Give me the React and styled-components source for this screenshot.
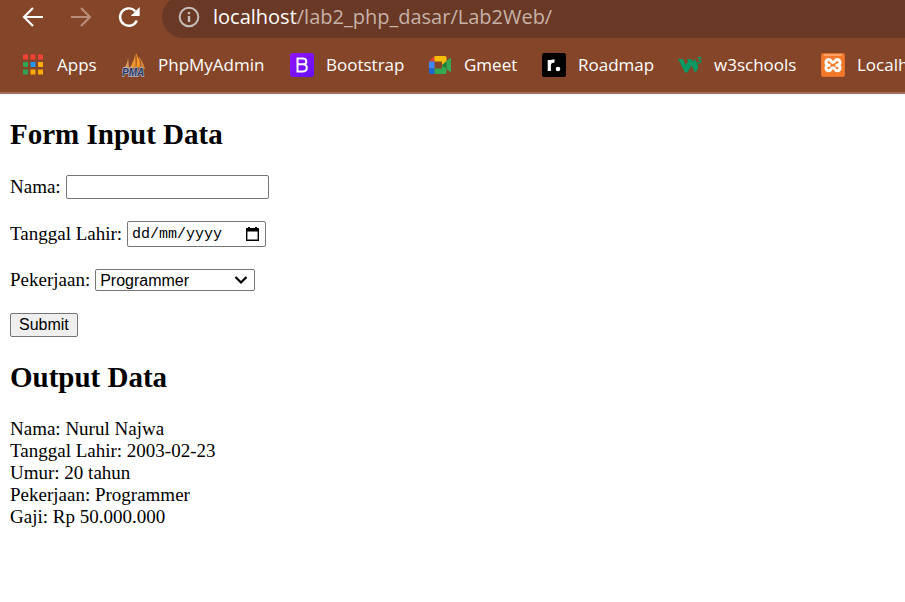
import React from "react";
import styled, { createGlobalStyle } from "styled-components";

const GlobalStyle = createGlobalStyle`
  body {
    margin: 0;
    background: #ffffff;
    color: #000000;
  }
  * {
    box-sizing: border-box;
  }
`;

const BrowserHeader = styled.header`
  background: #854528;
  border-bottom: 2px solid #a36f5c;
  font-family: "Open Sans", "Noto Sans", sans-serif;
  overflow: hidden;
`;

const Toolbar = styled.div`
  display: flex;
  align-items: flex-end;
  height: 38px;
  padding-left: 21px;
`;

const NavButtons = styled.nav`
  display: flex;
  gap: 24px;
  padding-bottom: 9px;
  margin-right: 21px;
`;

const IconButton = styled.button`
  display: flex;
  padding: 0;
  border: 0;
  background: none;
  color: ${({ disabled }) => (disabled ? "#b98d7b" : "#ffffff")};
`;

const AddressBar = styled.div`
  flex: 1;
  display: flex;
  align-items: center;
  gap: 12px;
  height: 42px;
  padding-left: 15px;
  border-radius: 21px 0 0 21px;
  background: #693926;
  color: #c6b2a9;
  font-size: 20px;
  line-height: 26px;
  white-space: nowrap;
`;

const Host = styled.span`
  color: #ffffff;
`;

const Bookmarks = styled.nav`
  display: flex;
  align-items: center;
  height: 54px;
  padding-left: 21px;
`;

const Bookmark = styled.a`
  display: flex;
  align-items: center;
  flex: 0 0 ${({ $width }) => $width}px;
  gap: 12px;
  color: #ffffff;
  font-size: 17px;
  line-height: 24px;
  white-space: nowrap;
  text-decoration: none;

  svg {
    flex-shrink: 0;
  }
`;

const Page = styled.main`
  padding: 24px 10px;
  font-family: "Liberation Serif", "Times New Roman", serif;
  font-size: 19px;
  line-height: 22px;
`;

const Heading = styled.h2`
  margin: 0 0 24px;
  font-size: 29px;
  line-height: 33px;
`;

const Form = styled.form`
  display: flex;
  flex-direction: column;
  align-items: flex-start;
  gap: 22px;
  margin-bottom: 24px;
`;

const Field = styled.div`
  display: flex;
  align-items: center;
  gap: 5px;
`;

const TextInput = styled.input`
  width: 203px;
  height: 24px;
  padding: 1px 2px;
  border: 1px solid #767676;
  border-radius: 2px;
  font: 16px "Liberation Sans", Arial, sans-serif;
`;

const DateBox = styled.div`
  display: flex;
  align-items: center;
  width: 139px;
  height: 26px;
  padding: 0 5px 0 4px;
  border: 1px solid #767676;
  border-radius: 2px;
  background: #ffffff;
`;

const DateInput = styled.input`
  flex: 1;
  min-width: 0;
  padding: 0;
  border: 0;
  outline: 0;
  font: 15px "Liberation Mono", monospace;

  &::placeholder {
    color: #000000;
    opacity: 1;
  }
`;

const PickerButton = styled.button`
  display: flex;
  padding: 0;
  border: 0;
  background: none;
  color: #000000;
`;

const SelectBox = styled.div`
  display: grid;
  align-items: center;
  width: 160px;

  > * {
    grid-area: 1 / 1;
  }

  > svg {
    justify-self: end;
    margin-right: 7px;
    pointer-events: none;
  }
`;

const Select = styled.select`
  appearance: none;
  width: 100%;
  height: 22px;
  padding: 0 4px;
  border: 1px solid #767676;
  border-radius: 2px;
  background: #ffffff;
  color: #000000;
  font: 16px "Liberation Sans", Arial, sans-serif;
`;

const SubmitButton = styled.button`
  height: 24px;
  padding: 0 8px;
  border: 1px solid #767676;
  border-radius: 2px;
  background: #efefef;
  color: #000000;
  font: 16px "Liberation Sans", Arial, sans-serif;
`;

const BackIcon = () => (
  <svg width="24" height="24" viewBox="0 0 24 24" fill="none" stroke="currentColor" strokeWidth="2.2">
    <path d="M22 12H3.5M12 3l-9 9 9 9" />
  </svg>
);

const ForwardIcon = () => (
  <svg width="24" height="24" viewBox="0 0 24 24" fill="none" stroke="currentColor" strokeWidth="2.2">
    <path d="M2 12h18.500M12 3l9 9-9 9" />
  </svg>
);

const ReloadIcon = () => (
  <svg width="24" height="24" viewBox="0 0 24 24" fill="none">
    <path d="M19.800 15.500A8.700 8.700 0 1 1 18.200 6.200" stroke="currentColor" strokeWidth="2.4" />
    <path d="M22.700 2v9h-9z" fill="currentColor" />
  </svg>
);

const InfoIcon = () => (
  <svg width="24" height="24" viewBox="0 0 24 24" fill="none" stroke="#c5bcb9" strokeWidth="2">
    <circle cx="12" cy="12" r="9.300" />
    <path d="M12 11v6M12 7v2.200" strokeWidth="2.400" />
  </svg>
);

const appColors = ["#f44336", "#f44336", "#f44336", "#31a354", "#2196f3", "#ffab00", "#31a354", "#ffab00", "#ffab00"];

const AppsIcon = () => (
  <svg width="24" height="24" viewBox="0 0 24 24">
    {appColors.map((color, i) => (
      <rect key={i} x={2 + (i % 3) * 7.500} y={1.500 + Math.floor(i / 3) * 7.500} width="5" height="5" fill={color} />
    ))}
  </svg>
);

const PmaIcon = () => (
  <svg width="24" height="24" viewBox="0 0 24 24">
    <path d="M6 4C6 9 4 13 1.500 16L7 15z" fill="#d99a5c" />
    <path d="M13 0C13 6 10 11 6.500 16L15 14z" fill="#f0962f" />
    <path d="M14 0l7 15-6-1z" fill="#ff9822" />
    <path d="M17 4c3 4 5 7 6 12l-5-1z" fill="#d9863a" />
    <path d="M11 6L8 15M14 3v12M18 7l1 8" stroke="#8e4b2b" strokeWidth="0.800" />
    <text
      x="0"
      y="23"
      fontFamily="Liberation Sans, sans-serif"
      fontSize="10"
      fontWeight="700"
      fontStyle="italic"
      fill="#293665"
      stroke="#b6b6c7"
      strokeWidth="1.400"
      paintOrder="stroke"
    >
      PMA
    </text>
  </svg>
);

const BootstrapIcon = () => (
  <svg width="24" height="24" viewBox="0 0 24 24">
    <defs>
      <linearGradient id="bootstrap-fill" x2="1" y2="1">
        <stop stopColor="#9013fe" />
        <stop offset="1" stopColor="#6610f2" />
      </linearGradient>
    </defs>
    <rect width="24" height="24" rx="3" fill="url(#bootstrap-fill)" />
    <path
      d="M7.500 5.500h5.300c2.200 0 3.500 1.100 3.500 2.900 0 1.800-1.300 2.900-3.500 2.900H7.500h5.500c2.500 0 3.800 1.400 3.800 3.500 0 2.300-1.500 3.700-4.200 3.700H7.500z"
      fill="none"
      stroke="#ffffff"
      strokeWidth="2"
    />
  </svg>
);

const MeetIcon = () => (
  <svg width="24" height="24" viewBox="0 0 24 24">
    <path d="M1 8.500L6.500 3v5.500z" fill="#ea4335" />
    <path d="M1 8.500h5.500v7H1z" fill="#4285f4" />
    <path d="M1 15.500h5.500V21H2.500Q1 21 1 19.500z" fill="#1967d2" />
    <path d="M6.500 3H17q1.500 0 1.500 1.500V9L14 12.500v-4H6.500z" fill="#fbbc04" />
    <path d="M6.500 15.500H14V12l4.500 3.500v4Q18.500 21 17 21H6.500z" fill="#34a853" />
    <path d="M14 12l4.500-4v8z" fill="#188038" />
    <path d="M18.500 8L23 4.500v15L18.500 16z" fill="#34a853" />
  </svg>
);

const RoadmapIcon = () => (
  <svg width="24" height="24" viewBox="0 0 24 24">
    <rect width="24" height="24" rx="2.500" fill="#000000" />
    <path d="M7.300 18V7M7.300 12.500c0-3.300 2-4.800 5.200-4.300" fill="none" stroke="#ffffff" strokeWidth="3.200" />
    <circle cx="16" cy="16" r="2.300" fill="#ffffff" />
  </svg>
);

const W3Icon = () => (
  <svg width="24" height="24" viewBox="0 0 24 24">
    <path d="M0 6h5l2.800 6L10 8.500 9 6h4l2 2.500L17 6l3 6.500V16l-3 3.500-3.600-7-3.900 7H7z" fill="#059862" />
    <path d="M19.500 4.600h3.400l-1.800 2.200c2.600.1 2 3.400-.2 3.400-.9 0-1.400-.4-1.600-1" fill="none" stroke="#059862" strokeWidth="1.200" />
  </svg>
);

const XamppIcon = () => (
  <svg width="24" height="24" viewBox="0 0 24 24">
    <rect width="24" height="24" rx="2" fill="#e0702c" />
    <rect x="1" y="1" width="22" height="22" rx="1" fill="#f4782a" />
    <path d="M3 2h18" stroke="#ffc9a4" />
    <path
      d="M9.500 12.200H8C4 12.200 4 6.500 7.800 6.500c2.500 0 2 3 4.200 3s1.700-3 4.200-3c3.800 0 3.800 5.700-.2 5.700h-1.500H16c4 0 4 5.600.2 5.600-2.500 0-2-3-4.200-3s-1.700 3-4.200 3c-3.800 0-3.800-5.600.2-5.600z"
      fill="none"
      stroke="#ffffff"
      strokeWidth="3"
    />
  </svg>
);

const CalendarIcon = () => (
  <svg width="15" height="16" viewBox="0 0 15 16">
    <path d="M1.700 2.700h11.600v11.600H1.700z" fill="none" stroke="currentColor" strokeWidth="1.400" />
    <path d="M1 2h13v3.500H1zM3 1h2v2H3zM10 1h2v2h-2z" fill="currentColor" />
  </svg>
);

const ChevronIcon = () => (
  <svg width="14" height="10" viewBox="0 0 14 10" fill="none" stroke="#000000" strokeWidth="2.200">
    <path d="M1.500 2l5.500 5.500L12.500 2" />
  </svg>
);

const bookmarks = [
  { label: "Apps", Icon: AppsIcon, width: 101 },
  { label: "PhpMyAdmin", Icon: PmaIcon, width: 168 },
  { label: "Bootstrap", Icon: BootstrapIcon, width: 138 },
  { label: "Gmeet", Icon: MeetIcon, width: 114 },
  { label: "Roadmap", Icon: RoadmapIcon, width: 136 },
  { label: "w3schools", Icon: W3Icon, width: 143 },
  { label: "Localhost", Icon: XamppIcon, width: 138 },
];

const output = [
  "Nama: Nurul Najwa",
  "Tanggal Lahir: 2003-02-23",
  "Umur: 20 tahun",
  "Pekerjaan: Programmer",
  "Gaji: Rp 50.000.000",
];

export default function App() {
  return (
    <>
      <GlobalStyle />
      <BrowserHeader>
        <Toolbar>
          <NavButtons>
            <IconButton type="button" aria-label="Back"><BackIcon /></IconButton>
            <IconButton type="button" aria-label="Forward" disabled><ForwardIcon /></IconButton>
            <IconButton type="button" aria-label="Reload"><ReloadIcon /></IconButton>
          </NavButtons>
          <AddressBar>
            <InfoIcon />
            <span><Host>localhost</Host>/lab2_php_dasar/Lab2Web/</span>
          </AddressBar>
        </Toolbar>
        <Bookmarks>
          {bookmarks.map(({ label, Icon, width }) => (
            <Bookmark key={label} href="#" $width={width}>
              <Icon />
              {label}
            </Bookmark>
          ))}
        </Bookmarks>
      </BrowserHeader>
      <Page>
        <Heading>Form Input Data</Heading>
        <Form onSubmit={(event) => event.preventDefault()}>
          <Field>
            <label htmlFor="nama">Nama:</label>
            <TextInput id="nama" type="text" />
          </Field>
          <Field>
            <label htmlFor="tanggal">Tanggal Lahir:</label>
            <DateBox>
              <DateInput id="tanggal" type="text" placeholder="dd/mm/yyyy" />
              <PickerButton type="button" aria-label="Show date picker"><CalendarIcon /></PickerButton>
            </DateBox>
          </Field>
          <Field>
            <label htmlFor="pekerjaan">Pekerjaan:</label>
            <SelectBox>
              <Select id="pekerjaan" defaultValue="Programmer">
                <option>Programmer</option>
              </Select>
              <ChevronIcon />
            </SelectBox>
          </Field>
          <SubmitButton type="submit">Submit</SubmitButton>
        </Form>
        <Heading>Output Data</Heading>
        {output.map((line) => (
          <div key={line}>{line}</div>
        ))}
      </Page>
    </>
  );
}
